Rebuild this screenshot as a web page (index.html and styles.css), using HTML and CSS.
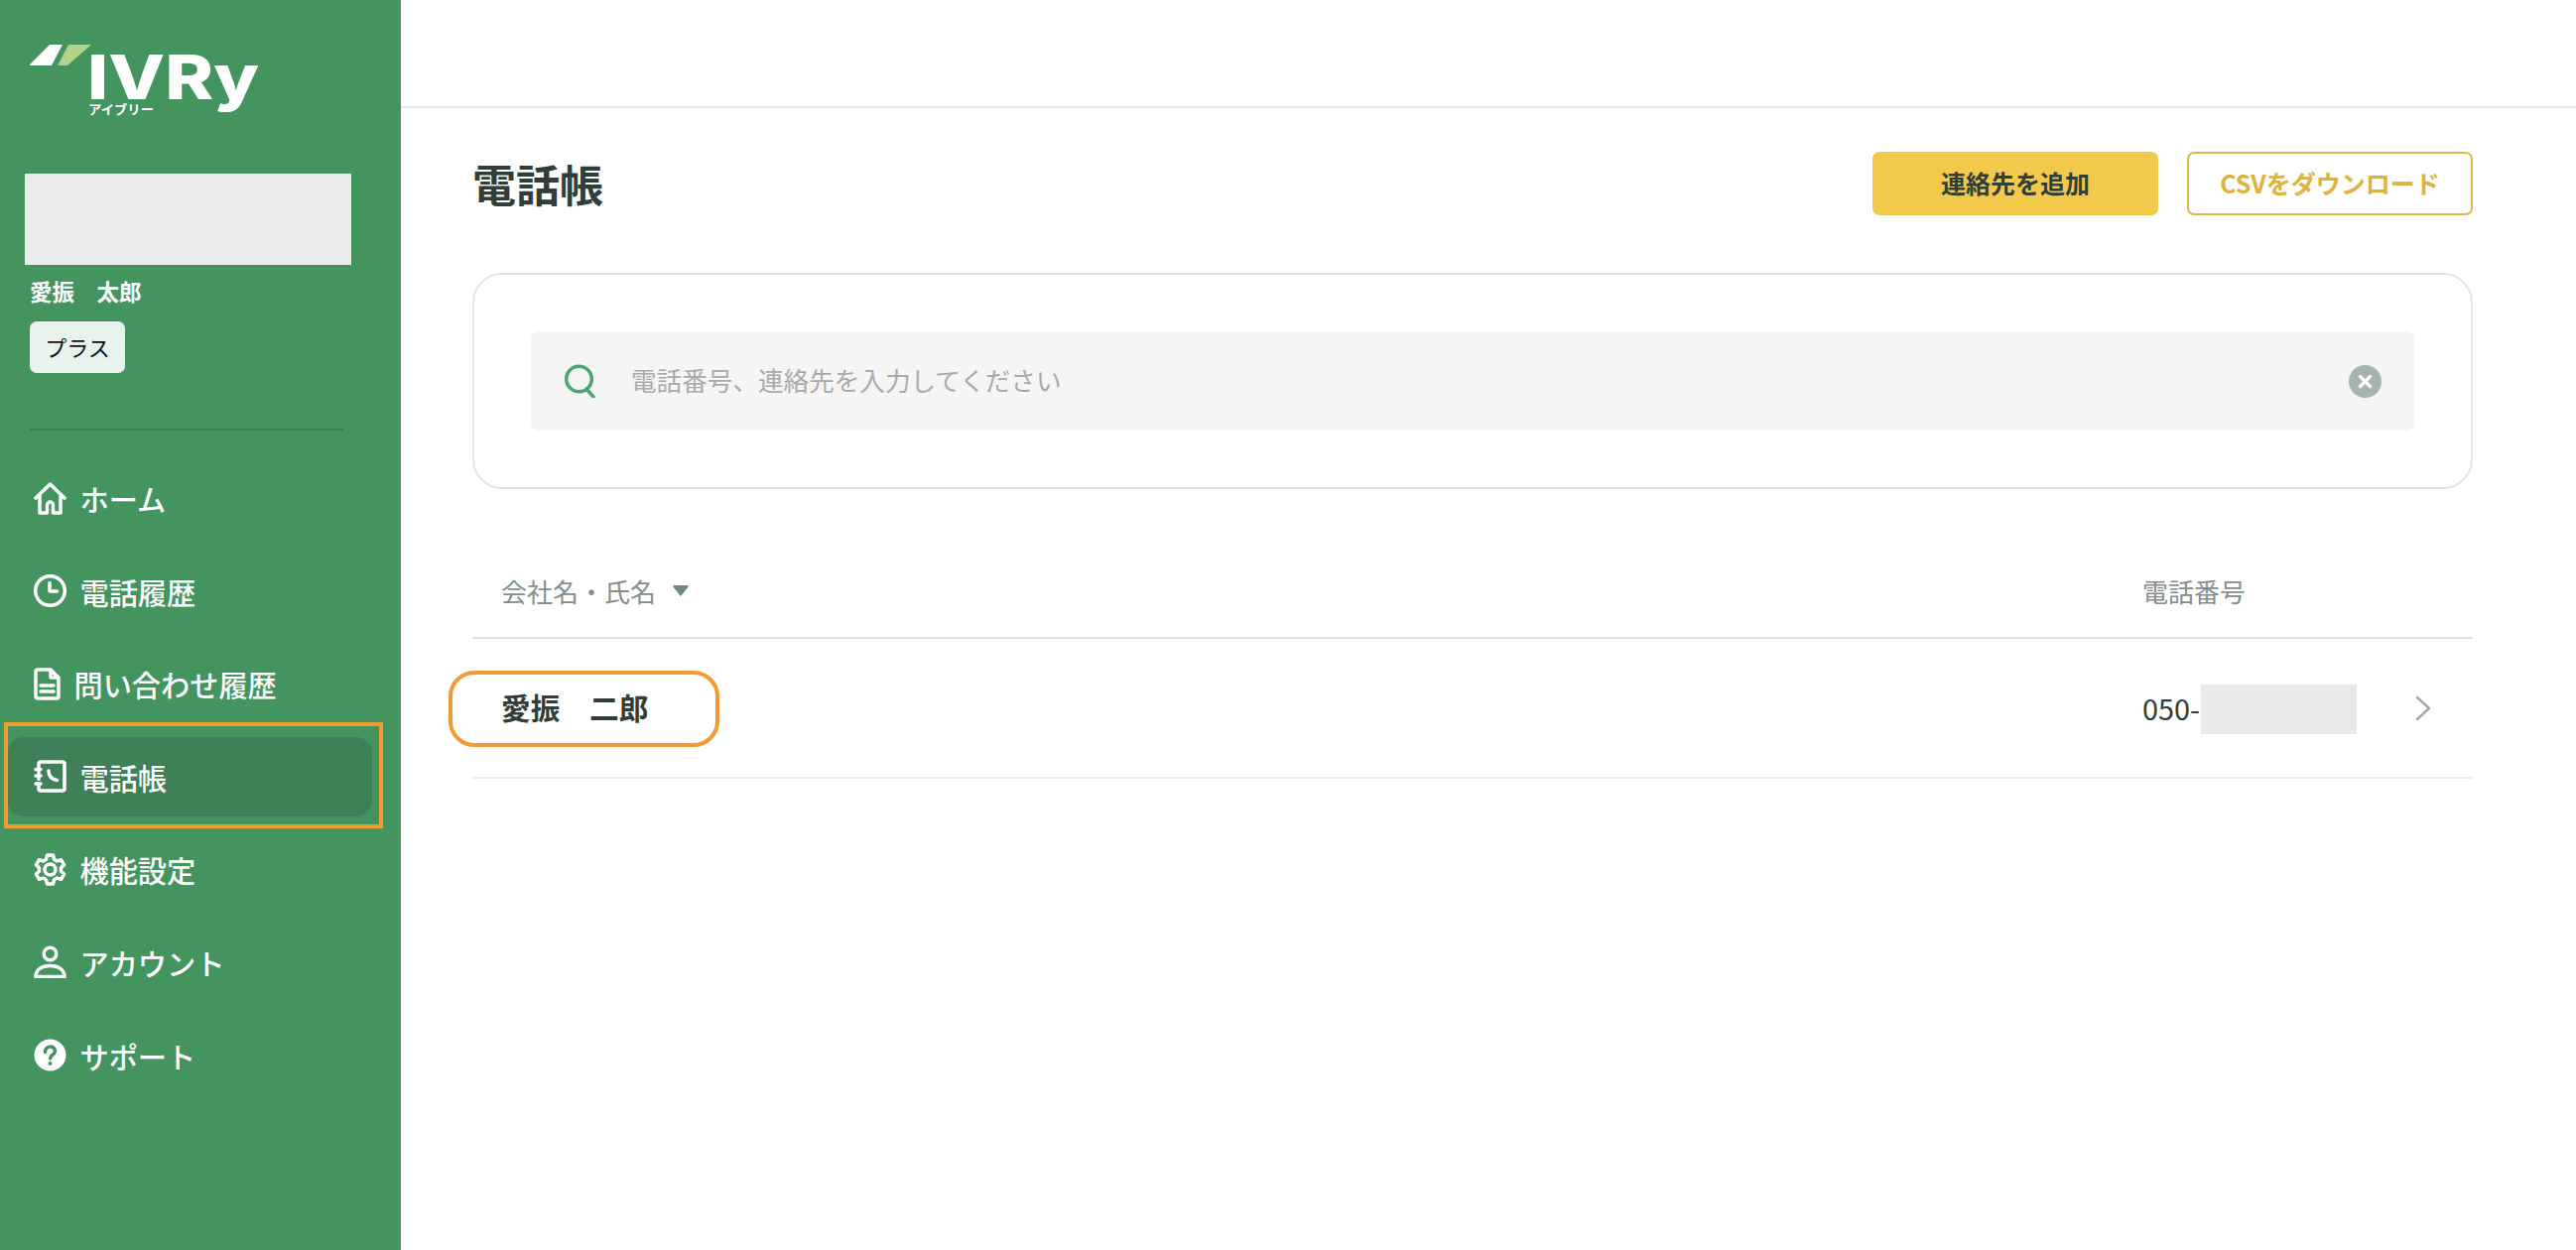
FILE: index.html
```html
<!DOCTYPE html>
<html lang="ja">
<head>
<meta charset="utf-8">
<title>電話帳</title>
<link rel="stylesheet" href="styles.css">
</head>
<body>
<div class="app">
  <aside class="sidebar">
    <svg class="logo" width="260" height="100" viewBox="0 0 260 100" aria-label="IVRy">
      <polygon points="30,45 50,25 63,25 52,46 30,46" class="logo-a" />
      <polygon points="58,46 69,25 92,25 68,46" class="logo-b" />
      <text x="88" y="80" class="logo-word" textLength="173" lengthAdjust="spacingAndGlyphs">IVRy</text>
      <text x="89" y="95" class="logo-kana" textLength="66" lengthAdjust="spacingAndGlyphs">アイブリー</text>
    </svg>
    <div class="account">
      <div class="redact-wide"></div>
      <div class="user-name">愛振　太郎</div>
      <div class="plan">プラス</div>
    </div>
    <hr class="side-rule">
    <nav class="nav">
      <a class="nav-item">
        <svg class="nav-icon" viewBox="0 0 33 33"><path d="M2 16 16.500 2 31 16M6 13v18h7.500v-8a3 3 0 0 1 6 0v8H27V13" /></svg>
        <span>ホーム</span>
      </a>
      <a class="nav-item">
        <svg class="nav-icon" viewBox="0 0 33 33"><circle cx="16.500" cy="16.500" r="14.800" /><path d="M16 8.500v8.500h7.500" /></svg>
        <span>電話履歴</span>
      </a>
      <a class="nav-item">
        <svg class="nav-icon nav-icon-narrow" viewBox="0 0 27 33"><path d="M4 2h13l8 8v19a2 2 0 0 1-2 2H4a2 2 0 0 1-2-2V4a2 2 0 0 1 2-2ZM17 2v8h8M7 18h13M7 24h13" /></svg>
        <span>問い合わせ履歴</span>
      </a>
      <a class="nav-item is-active">
        <svg class="nav-icon" viewBox="0 0 33 33"><path d="M5 7V4a2 2 0 0 1 2-2h22a2 2 0 0 1 2 2v25a2 2 0 0 1-2 2H7a2 2 0 0 1-2-2v-3M5 13v-1M5 19.500v-1M2 9.500h5M2 16h5M2 24h5" /><path d="M15 11c0 5 3 8.500 8.500 9.500" /></svg>
        <span>電話帳</span>
        <i class="mark-nav"></i>
      </a>
      <a class="nav-item">
        <svg class="nav-icon" viewBox="0 0 33 33"><circle cx="16.500" cy="16.500" r="5.500" /><path d="M13.500 2h6l1 4.200 3 1.700 4.100-1.200 3 5.100-3.100 3v3.400l3.100 3-3 5.100-4.100-1.200-3 1.700-1 4.200h-6l-1-4.200-3-1.700-4.100 1.200-3-5.100 3.100-3v-3.400l-3.100-3 3-5.100 4.100 1.200 3-1.700Z" /></svg>
        <span>機能設定</span>
      </a>
      <a class="nav-item">
        <svg class="nav-icon" viewBox="0 0 33 33"><circle cx="16.500" cy="8.500" r="6.300" /><path d="M2 31.500c0-7 6-11 14.500-11S31 24.500 31 31.500Z" /></svg>
        <span>アカウント</span>
      </a>
      <a class="nav-item">
        <svg class="nav-icon" viewBox="0 0 33 33"><circle cx="16.500" cy="16.500" r="16" class="icon-solid" /><path d="M11.500 13.500c0-7 10-7 10-1 0 4-5 3.500-5 7.500" class="icon-q" /><circle cx="16.500" cy="25" r="2" class="icon-dot" /></svg>
        <span>サポート</span>
      </a>
    </nav>
  </aside>

  <main class="main">
    <div class="topbar"></div>
    <div class="content">
      <header class="title-row">
        <h1 class="title">電話帳</h1>
        <div class="actions">
          <button class="btn btn-primary">連絡先を追加</button>
          <button class="btn btn-outline">CSVをダウンロード</button>
        </div>
      </header>

      <section class="search-card">
        <div class="search">
          <svg class="search-icon" viewBox="0 0 32 34"><circle cx="14.500" cy="15" r="12.800" /><path d="M22 25l7 8" /></svg>
          <span class="placeholder">電話番号、連絡先を入力してください</span>
          <svg class="clear-icon" viewBox="0 0 33 33"><circle cx="16.500" cy="16.500" r="16.500" class="clear-bg" /><path d="M11.500 11.500l10 10M21.500 11.500l-10 10" class="clear-x" /></svg>
        </div>
      </section>

      <div class="table">
        <div class="table-row table-head">
          <div class="cell-name">会社名・氏名<svg class="sort" viewBox="0 0 14 10"><path d="M1 0h12a1 1 0 0 1 .8 1.600L7 10 .2 1.600A1 1 0 0 1 1 0Z" /></svg></div>
          <div class="cell-phone">電話番号</div>
        </div>
        <div class="table-row table-body">
          <div class="cell-name contact-name">愛振　二郎<i class="mark-row"></i></div>
          <div class="cell-phone phone"><span>050-</span><span class="redact-phone"></span></div>
          <svg class="chevron" viewBox="0 0 16 26"><path d="M2 2l12 11L2 24" /></svg>
        </div>
      </div>
    </div>
  </main>
</div>
</body>
</html>
```

FILE: styles.css
```css
* { box-sizing: border-box; }
html, body { margin: 0; height: 100%; }
body {
  font-family: "Noto Sans CJK JP", "Noto Sans", sans-serif;
  color: #2f3e38;
  background: #fff;
  overflow: hidden;
}
.app { display: flex; height: 1260px; }

/* Sidebar */
.sidebar {
  width: 404px;
  flex: none;
  background: #43945f;
  color: #fff;
  display: flex;
  flex-direction: column;
}
.logo { display: block; flex: none; margin-top: 20px; height: 100px; width: 260px; }
.logo-a { fill: #fff; }
.logo-b { fill: #b3d28b; }
.logo-word { font: 800 62px "Inter", sans-serif; fill: #fff; }
.logo-kana { font: 700 13px "Noto Sans CJK JP", sans-serif; fill: #fff; }

.account { padding: 55px 0 0 25px; }
.redact-wide { width: 329px; height: 92px; background: #ebebeb; }
.user-name {
  margin: 9px 0 0 5px;
  font-size: 22.500px;
  line-height: 34px;
  font-weight: 700;
}
.plan {
  margin: 14px 0 0 5px;
  width: 96px;
  height: 52px;
  border-radius: 7px;
  background: #e8f3ee;
  color: #111;
  font-size: 22px;
  line-height: 50px;
  text-align: center;
}
.side-rule {
  margin: 56px 58px 0 30px;
  border: 0;
  border-top: 2px solid #3d8056;
  height: 0;
}
.nav {
  margin-top: 28px;
  display: flex;
  flex-direction: column;
  gap: 13.600px;
}
.nav-item {
  position: relative;
  height: 80px;
  margin: 0 29px 0 8px;
  padding-left: 26px;
  border-radius: 16px;
  display: flex;
  align-items: center;
  gap: 13.500px;
  font-size: 29.200px;
  font-weight: 500;
  color: #fff;
}
.nav-item.is-active { background: #3f8059; }
.nav-icon {
  width: 33px;
  height: 33px;
  flex: none;
  fill: none;
  stroke: #fff;
  stroke-width: 3.500;
  stroke-linejoin: round;
  stroke-linecap: round;
}
.nav-icon-narrow { width: 27px; }
.icon-solid { fill: #fff; stroke: none; }
.icon-q { stroke: #43945f; stroke-width: 3.500; }
.icon-dot { fill: #43945f; stroke: none; }
.mark-nav {
  position: absolute;
  left: -4px;
  right: -11px;
  top: -15px;
  bottom: -12px;
  border: 4px solid #f39a32;
}

/* Main */
.main { flex: 1; min-width: 0; display: flex; flex-direction: column; }
.topbar { height: 109px; flex: none; border-bottom: 2px solid #e6e8e7; }
.content { padding: 44px 104px 0 72px; }
.title-row { display: flex; align-items: center; justify-content: space-between; height: 64px; }
.title { margin: 0; font-size: 44px; line-height: 64px; font-weight: 700; }
.actions { display: flex; gap: 29px; }
.btn {
  height: 64px;
  border-radius: 7px;
  font-family: inherit;
  font-size: 25px;
  line-height: 58px;
  font-weight: 700;
  padding: 0 0 3px;
}
.btn-primary { width: 288px; background: #f3c94b; border: 0; color: #2f3e38; }
.btn-outline { width: 288px; background: #fff; border: 2px solid #e0b84f; color: #e0b23c; }

.search-card {
  margin-top: 58px;
  height: 218px;
  border: 2px solid #e3e3e3;
  border-radius: 30px;
  padding: 57px 57px;
}
.search {
  height: 100px;
  background: #f5f5f5;
  border-radius: 8px;
  padding: 0 33px 0 34px;
  display: flex;
  align-items: center;
}
.search-icon {
  width: 32px;
  height: 34px;
  flex: none;
  fill: none;
  stroke: #46a674;
  stroke-width: 3.500;
  stroke-linecap: round;
}
.placeholder { margin: 0 0 3px 35px; font-size: 25.600px; color: #aaa; flex: 1; }
.clear-icon { width: 33px; height: 33px; flex: none; }
.clear-bg { fill: #a5b5ae; }
.clear-x { stroke: #fff; stroke-width: 3.500; stroke-linecap: round; }

.table { margin-top: 0; }
.table-row {
  display: grid;
  grid-template-columns: 1654px 1fr 58px;
  align-items: center;
  padding-left: 29px;
}
.table-head {
  height: 151px;
  padding-top: 55px;
  border-bottom: 2px solid #e0e0e0;
  font-size: 26px;
  color: #858e8a;
}
.table-head .cell-name { display: flex; align-items: center; }
.sort { width: 16px; height: 11px; margin-left: 17px; fill: #6f8a7f; }
.table-body { height: 141px; border-bottom: 2px solid #ecedec; }
.contact-name {
  position: relative;
  font-size: 29.700px;
  font-weight: 700;
  line-height: 40px;
  top: -1px;
}
.mark-row {
  position: absolute;
  left: -53px;
  top: -17px;
  width: 273px;
  height: 77px;
  border: 4px solid #f39a32;
  border-radius: 26px;
}
.phone { display: flex; align-items: center; font-size: 28.800px; }
.redact-phone { width: 157px; height: 50px; margin: 3px 0 0 1px; background: #e9e9e9; }
.chevron {
  width: 16px;
  height: 26px;
  fill: none;
  stroke: #a9a9a9;
  stroke-width: 2.500;
  stroke-linecap: round;
  stroke-linejoin: round;
}
```
